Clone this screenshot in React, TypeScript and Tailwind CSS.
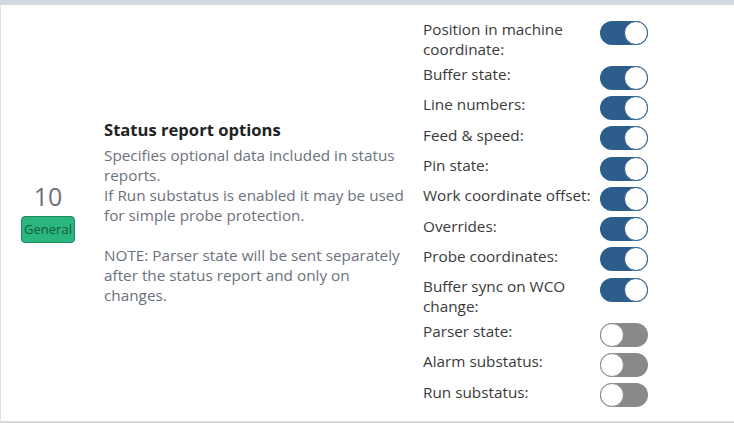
import React from "react";

type Opt = { label: string; on: boolean };

const options: Opt[] = [
  { label: "Position in machine coordinate:", on: true },
  { label: "Buffer state:", on: true },
  { label: "Line numbers:", on: true },
  { label: "Feed & speed:", on: true },
  { label: "Pin state:", on: true },
  { label: "Work coordinate offset:", on: true },
  { label: "Overrides:", on: true },
  { label: "Probe coordinates:", on: true },
  { label: "Buffer sync on WCO change:", on: true },
  { label: "Parser state:", on: false },
  { label: "Alarm substatus:", on: false },
  { label: "Run substatus:", on: false },
];

function Toggle({ on }: { on: boolean }) {
  return (
    <div
      className={
        on
          ? "flex h-[24px] w-[48px] shrink-0 justify-end rounded-full bg-[#2d5e8b]"
          : "flex h-[24px] w-[48px] shrink-0 justify-start rounded-full bg-[#898989]"
      }>
      <div
        className={
          on
            ? "h-[24px] w-[24px] rounded-full border border-[#2d5e8b] bg-white"
            : "h-[24px] w-[24px] rounded-full border border-[#898989] bg-white"
        }
      />
    </div>
  );
}

export default function App() {
  return (
    <div className="h-[423px] w-[734px] bg-white font-['Open_Sans',sans-serif]">
      <div className="h-[5px] bg-[#d3d7de]" />
      <div className="flex h-[418px] items-center border-b-2 border-l border-b-[#d6d6d6] border-l-[#e2e3ea]">
        {/* setting id + group */}
        <div className="flex w-[94px] flex-col items-center pb-[6px]">
          <span className="text-[25px] leading-[36px] text-[#6b717d]">10</span>
          <span className="mt-[2px] rounded-[4px] border border-[#1d8a5d] bg-[#2bb67f] px-[2px] text-[13px] leading-[25px] text-[#145a3b]">
            General
          </span>
        </div>

        {/* description */}
        <div className="w-[328px] pb-[4px] pl-[9px]">
          <div className="text-[16.6px] font-bold leading-[24px] text-[#222]">Status report options</div>
          <p className="mt-[3px] w-[307px] text-[15.3px] leading-[20px] text-[#6b717d]">
            Specifies optional data included in status reports.
            <br />
            If Run substatus is enabled it may be used for simple probe protection.
            <br />
            <br />
            NOTE: Parser state will be sent separately after the status report and only on changes.
          </p>
        </div>

        {/* switches */}
        <div className="flex w-[240px] flex-col pt-[2px]">
          {options.map((o) => (
            <div key={o.label} className="mb-[6.3px] flex items-start last:mb-0">
              <span className="-mt-[1.5px] w-[177px] pr-[2px] text-[15.3px] leading-[20px] text-[#3a3a3a]">{o.label}</span>
              <Toggle on={o.on} />
            </div>
          ))}
        </div>
      </div>
    </div>
  );
}
